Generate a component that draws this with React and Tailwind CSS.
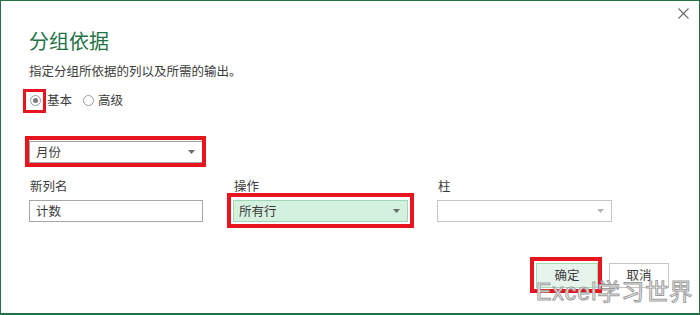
export default function App() {
  const font = { fontFamily: '"Noto Sans CJK SC", "Noto Sans", sans-serif' };
  const Arrow = ({ c = "#6b6b6b" }) => (
    <svg width="7" height="4" viewBox="0 0 7 4" className="shrink-0">
      <path d="M0 0 H7 L3.5 4 Z" fill={c} />
    </svg>
  );
  return (
    <div
      className="relative w-[700px] h-[315px] bg-white border border-b-2 border-[#217346] text-[#3b3b3b] overflow-hidden"
      style={font}
    >
      <div className="h-[26px] flex justify-end items-start pt-[7px] pr-[10px]">
        <svg width="11" height="11" viewBox="0 0 11 11">
          <path d="M0.5 0.5 L10.5 10.5 M10.5 0.5 L0.5 10.5" stroke="#6a6a6a" strokeWidth="1.1" />
        </svg>
      </div>
      <div className="pl-[28px]">
        <div className="text-[20px] leading-[28px] text-[#217346]">分组依据</div>
        <div className="mt-[7px] text-[12.5px] leading-[18px]">指定分组所依据的列以及所需的输出。</div>
        <div className="mt-[10px] h-[20px] flex items-center text-[12.5px]">
          <span className="relative ml-[1px] w-[11px] h-[11px] rounded-full border border-[#9a9a9a] flex items-center justify-center">
            <span className="w-[5px] h-[5px] rounded-full bg-[#7a7a7a]" />
            <span className="absolute left-[-8px] top-[-7px] w-[23px] h-[24px] border-[3px] border-[#e8141e]" />
          </span>
          <span className="ml-[6px]">基本</span>
          <span className="ml-[11px] w-[11px] h-[11px] rounded-full border border-[#9a9a9a]" />
          <span className="ml-[4px]">高级</span>
        </div>
        <div className="mt-[31px] relative w-[174px] h-[22px] border border-[#a3a3a3] flex items-center justify-between pl-[6px] pr-[7px] text-[12.5px]">
          <span>月份</span>
          <Arrow />
          <span className="absolute left-[-5px] top-[-6px] right-[-4px] bottom-[-5px] border-[4px] border-[#e8141e]" />
        </div>
        <div className="mt-[14px] grid grid-cols-[175px_175px_175px] gap-x-[29px] text-[12.5px]">
          <div className="leading-[18px] pl-[1px]">新列名</div>
          <div className="leading-[18px] pl-[1px]">操作</div>
          <div className="leading-[18px] pl-[1px]">柱</div>
          <div className="mt-[5px] w-[174px] h-[22px] border border-[#a8a8a8] flex items-center pl-[6px]">计数</div>
          <div className="mt-[5px] relative h-[22px] border border-[#9fd6b6] bg-[#d4f0df] flex items-center justify-between pl-[5px] pr-[7px]">
            <span>所有行</span>
            <Arrow />
            <span className="absolute left-[-7px] top-[-8px] right-[-7px] bottom-[-7px] border-[4px] border-[#e8141e]" />
          </div>
          <div className="mt-[5px] h-[22px] border border-[#c6c6c6] flex items-center justify-end pr-[7px]">
            <Arrow c="#b5b5b5" />
          </div>
        </div>
      </div>
      <div className="mt-[41px] flex justify-end gap-[11px] mr-[30px] text-[12.5px]">
        <div className="relative w-[62px] h-[25px] border border-[#a6d9bb] bg-[#e6f4ec] flex items-center justify-center">
          确定
          <span className="absolute left-[-7px] top-[-7px] right-[-5px] bottom-[-6px] border-[4px] border-[#e8141e]" />
        </div>
        <div className="w-[60px] h-[25px] border border-[#c6c6c6] flex items-center justify-center">取消</div>
      </div>
      <div
        className="absolute left-[535px] top-[274px] text-[23px] leading-[30px] text-white tracking-[1px] [-webkit-text-stroke:1px_#9c9c9c] whitespace-nowrap"
        style={{ fontFamily: '"Liberation Sans", "Noto Sans CJK SC", sans-serif' }}
      >
        Excel<span style={{ fontFamily: '"Noto Sans CJK SC", sans-serif' }}>学习世界</span>
      </div>
    </div>
  );
}
